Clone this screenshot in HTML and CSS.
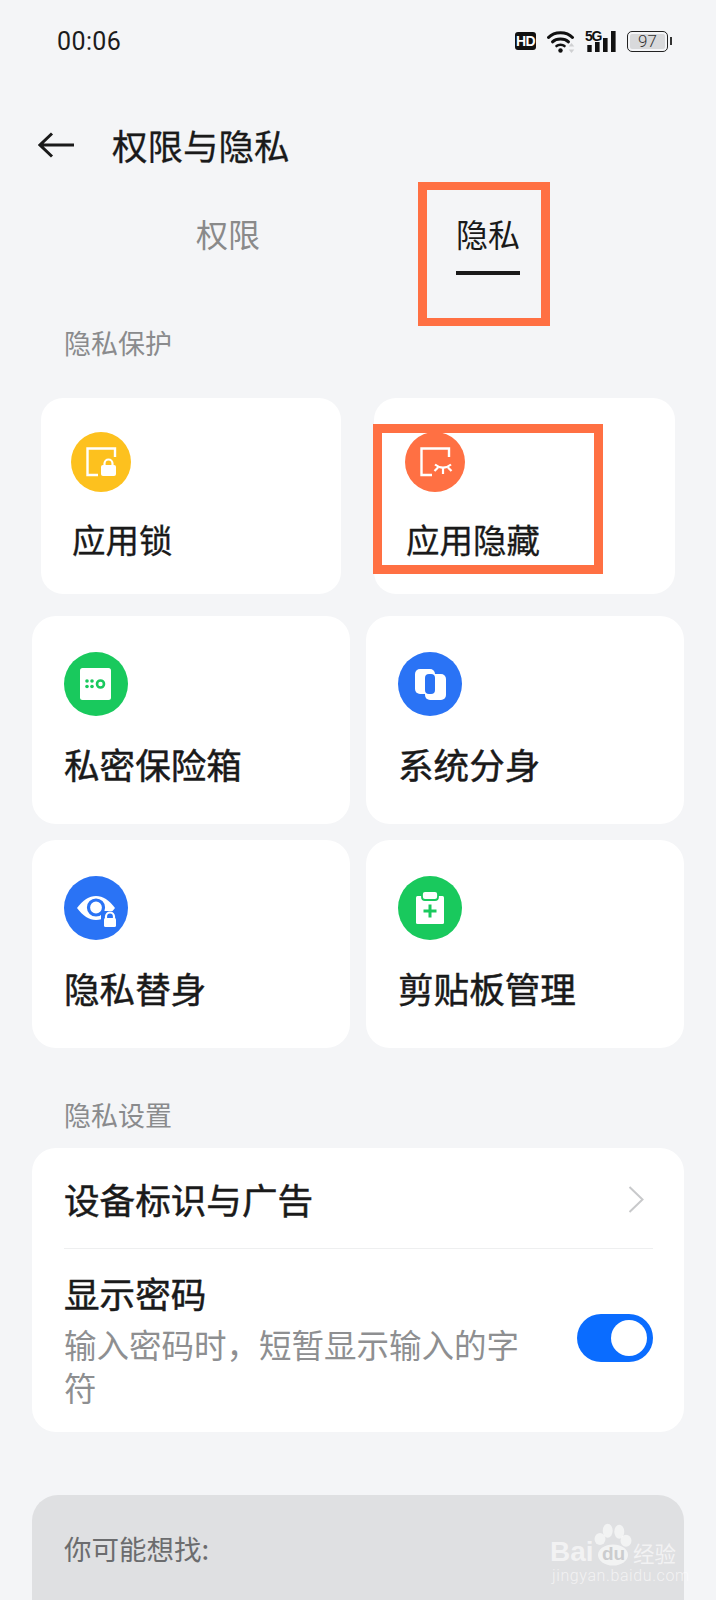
FILE: index.html
```html
<!DOCTYPE html>
<html lang="zh-CN">
<head>
<meta charset="utf-8">
<title>权限与隐私</title>
<link rel="stylesheet" href="styles.css">
</head>
<body>
<div class="page">
  <header class="status">
    <span class="time">00:06</span>
    <div class="status-icons">
      <span class="hd">HD</span>
      <svg class="wifi" width="28" height="23" viewBox="0 0 28 23" fill="none">
        <path d="M1.500 7.500C7.500 1 19.500 1 25.500 7.500" stroke="#111" stroke-width="3" stroke-linecap="round"/>
        <path d="M5.500 11.800C9.500 8 17.500 8 21.500 11.800" stroke="#111" stroke-width="3" stroke-linecap="round"/>
        <path d="M9.500 16C11.500 14.300 15.500 14.300 17.500 16" stroke="#111" stroke-width="2.600" stroke-linecap="round"/>
        <circle cx="13.500" cy="20.500" r="2.200" fill="#111"/>
        <path d="M24.500 13l2.800 3.500h-5.600zM24.500 23l2.800-3.500h-5.600z" fill="#cfd0d2"/>
      </svg>
      <div class="signal">
        <span class="five-g">5G</span>
        <svg width="31" height="21" viewBox="0 0 31 21" fill="#111">
          <rect x="2.300" y="14" width="4.400" height="7"/>
          <rect x="10" y="11" width="4.600" height="10"/>
          <rect x="18" y="7" width="4.600" height="14"/>
          <rect x="26" y="0" width="4.600" height="21"/>
        </svg>
      </div>
      <div class="battery"><span class="battery-level">97</span></div>
    </div>
  </header>

  <div class="toolbar">
    <svg class="back" width="36" height="26" viewBox="0 0 36 26" fill="none">
      <path d="M14 1.500L2 13l12 11.500M2 13h34" stroke="#1a1a1a" stroke-width="3"/>
    </svg>
    <h1 class="title">权限与隐私</h1>
  </div>

  <nav class="tabs">
    <span class="tab">权限</span>
    <span class="tab tab-active"><span class="tab-text">隐私</span><span class="tab-line"></span></span>
  </nav>

  <h2 class="section-label section-label-first">隐私保护</h2>

  <div class="row-small">
    <div class="card card-small">
      <svg class="icon-small" viewBox="0 0 60 60">
        <circle cx="30" cy="30" r="30" fill="#fdc11e"/>
        <path d="M44 25V16.500H16.500V43H27" fill="none" stroke="#fff" stroke-width="2.400"/>
        <rect x="30" y="33" width="15" height="11" rx="2" fill="#fff"/>
        <path d="M33.500 34v-2.500a4 4 0 0 1 8 0V34" fill="none" stroke="#fff" stroke-width="2.200"/>
      </svg>
      <div class="card-title-small">应用锁</div>
    </div>
    <div class="card card-small card-marked">
      <svg class="icon-small" viewBox="0 0 60 60">
        <circle cx="30" cy="30" r="30" fill="#ff7043"/>
        <path d="M44 25V16.500H16.500V43H27" fill="none" stroke="#fff" stroke-width="2.400"/>
        <path d="M30 32.500q8 6.500 16 0M38 36.500V42M33 35.500l-3.500 3.500M43 35.500l3.500 3.500" fill="none" stroke="#fff" stroke-width="2.200"/>
      </svg>
      <div class="card-title-small">应用隐藏</div>
      <div class="mark-box"></div>
    </div>
  </div>

  <div class="grid">
    <div class="card">
      <svg class="icon" viewBox="0 0 64 64">
        <circle cx="32" cy="32" r="32" fill="#19c95d"/>
        <rect x="16" y="16" width="31" height="32" rx="2.500" fill="#fff"/>
        <g fill="#19c95d">
          <circle cx="23" cy="29" r="1.800"/><circle cx="28" cy="29" r="1.800"/>
          <circle cx="23" cy="34.500" r="1.800"/><circle cx="28" cy="34.500" r="1.800"/>
        </g>
        <circle cx="36.500" cy="32" r="3.500" fill="none" stroke="#19c95d" stroke-width="2.600"/>
      </svg>
      <div class="card-title">私密保险箱</div>
    </div>
    <div class="card">
      <svg class="icon" viewBox="0 0 64 64">
        <circle cx="32" cy="32" r="32" fill="#2a73f5"/>
        <rect x="17" y="17" width="20" height="25" rx="5" fill="#fff"/>
        <rect x="27" y="22" width="21" height="26" rx="5" fill="#fff"/>
        <rect x="27" y="22" width="10" height="20" rx="4" fill="#2a73f5"/>
      </svg>
      <div class="card-title">系统分身</div>
    </div>
    <div class="card">
      <svg class="icon" viewBox="0 0 64 64">
        <circle cx="32" cy="32" r="32" fill="#2a73f5"/>
        <path d="M13 32C19 24 25 20 32 20S45 24 51 32C45 40 39 44 32 44S19 40 13 32Z" fill="#fff"/>
        <circle cx="32" cy="31.500" r="7.500" fill="#fff" stroke="#2a73f5" stroke-width="3.200"/>
        <rect x="37" y="35" width="18" height="18" rx="3" fill="#2a73f5"/>
        <path d="M42 43v-2.500a4 4 0 0 1 8 0V43" fill="none" stroke="#fff" stroke-width="2.200"/>
        <rect x="40" y="42" width="12" height="9" rx="1.500" fill="#fff"/>
      </svg>
      <div class="card-title">隐私替身</div>
    </div>
    <div class="card">
      <svg class="icon" viewBox="0 0 64 64">
        <circle cx="32" cy="32" r="32" fill="#19c95d"/>
        <rect x="18" y="20" width="28" height="28" rx="1.500" fill="#fff"/>
        <rect x="24" y="15" width="16" height="9" rx="3" fill="#fff" stroke="#19c95d" stroke-width="1.800"/>
        <path d="M32 28.500v13M25.500 35h13" stroke="#19c95d" stroke-width="3" fill="none"/>
      </svg>
      <div class="card-title">剪贴板管理</div>
    </div>
  </div>

  <h2 class="section-label section-label-second">隐私设置</h2>

  <section class="card settings">
    <div class="setting-link">
      <span class="setting-title">设备标识与广告</span>
      <svg class="chevron" width="16" height="27" viewBox="0 0 16 27" fill="none">
        <path d="M1.500 1l13 12.500-13 12.500" stroke="#c8c9cb" stroke-width="2"/>
      </svg>
    </div>
    <div class="setting-toggle">
      <div class="setting-body">
        <div class="setting-title">显示密码</div>
        <div class="setting-desc">输入密码时，短暂显示输入的字符</div>
      </div>
      <div class="toggle"><span class="toggle-knob"></span></div>
    </div>
  </section>

  <section class="suggest">你可能想找:</section>

  <div class="watermark">
    <div class="wm-logo">
      <span class="wm-bai">Bai</span>
      <span class="wm-paw">
        <svg width="40" height="43" viewBox="0 0 40 43">
          <g fill="#ffffff" fill-opacity="0.6">
            <ellipse cx="14.700" cy="7.700" rx="5" ry="7"/>
            <ellipse cx="26.300" cy="8.700" rx="5" ry="7"/>
            <ellipse cx="7" cy="16" rx="5.500" ry="6"/>
            <ellipse cx="33" cy="17.700" rx="5.500" ry="6"/>
            <ellipse cx="20" cy="32" rx="15" ry="10.500"/>
          </g>
        </svg>
        <span class="wm-du">du</span>
      </span>
      <span class="wm-jingyan">经验</span>
    </div>
    <div class="wm-url">jingyan.baidu.com</div>
  </div>
</div>
</body>
</html>
```
FILE: styles.css
```css
* { box-sizing: border-box; }
html, body { margin: 0; padding: 0; }
body {
  background: #f4f5f7;
  font-family: "Noto Sans CJK SC", "Noto Sans", sans-serif;
  color: #1a1a1a;
}
.page {
  position: relative;
  width: 716px;
  height: 1600px;
  overflow: hidden;
  background: #f4f5f7;
}
.status {
  height: 82px;
  padding: 0 48px 0 57px;
  display: flex;
  align-items: center;
  justify-content: space-between;
}
.time {
  font-family: Roboto, sans-serif;
  font-size: 25px;
  letter-spacing: 0.4px;
  color: #1c1c1c;
}
.status-icons {
  display: flex;
  align-items: center;
}
.hd {
  width: 21px;
  height: 18px;
  margin-right: 11px;
  border-radius: 3px;
  background: #111;
  color: #fff;
  font-family: "Liberation Sans", sans-serif;
  font-weight: 700;
  font-size: 14px;
  line-height: 18px;
  text-align: center;
  letter-spacing: -0.6px;
}
.wifi { margin-right: 10px; }
.signal {
  position: relative;
  width: 31px;
  height: 21px;
  margin-right: 11px;
}
.signal svg { display: block; }
.five-g {
  position: absolute;
  left: 0;
  top: -2px;
  font-family: "Liberation Sans", sans-serif;
  font-weight: 700;
  font-size: 14px;
  line-height: 14px;
  letter-spacing: -1.2px;
  color: #111;
}
.battery {
  position: relative;
  width: 41px;
  height: 21px;
  padding: 2px;
  border: 1.500px solid #222;
  border-radius: 5px;
}
.battery::after {
  content: "";
  position: absolute;
  right: -5px;
  top: 5px;
  width: 2px;
  height: 8px;
  background: #333;
}
.battery-level {
  display: block;
  height: 100%;
  border-radius: 2px;
  background: #d8d9db;
  font-family: Roboto, sans-serif;
  font-size: 17px;
  font-weight: 300;
  line-height: 15px;
  text-align: center;
  color: #333;
}
.toolbar {
  height: 100px;
  padding: 38px 0 0 38px;
  display: flex;
  align-items: flex-start;
}
.back { margin: 12px 38px 0 0; }
.title {
  margin: 0;
  font-size: 35.500px;
  font-weight: 400;
  line-height: 50px;
  -webkit-text-stroke: 0.3px #1a1a1a;
}
.tabs {
  height: 144px;
  display: flex;
  padding-left: 196px;
}
.tab {
  width: 64px;
  margin-right: 158px;
  padding-top: 28px;
  font-size: 32px;
  line-height: 46px;
  color: #8a8a8a;
}
.tab-active {
  width: 132px;
  margin: 0;
  padding: 20px 0 0 8px;
  border: solid #ff7043;
  border-width: 8px 9px;
  color: #1a1a1a;
  display: flex;
  flex-direction: column;
  align-items: center;
}
.tab-line {
  width: 64px;
  height: 4px;
  margin-top: 15px;
  background: #1a1a1a;
}
.section-label {
  margin: 0 0 36px 64px;
  font-size: 27px;
  font-weight: 400;
  line-height: 36px;
  color: #8a8b8d;
}
.section-label-first {
  margin-top: -1px;
  margin-bottom: 37px;
}
.section-label-second {
  margin-top: 49px;
  margin-bottom: 15px;
}
.card {
  background: #fff;
  border-radius: 24px;
}
.row-small {
  display: grid;
  grid-template-columns: 300px 301px;
  gap: 33px;
  margin: 0 41px 22px;
}
.card-small {
  height: 196px;
  padding: 34px 0 0 30px;
  border-radius: 22px;
}
.card-marked {
  position: relative;
  padding-left: 31px;
}
.card-small .card-title-small { margin-left: 1px; }
.mark-box {
  position: absolute;
  left: -1px;
  top: 26px;
  width: 230px;
  height: 150px;
  border: 9px solid #ff7043;
}
.icon-small {
  display: block;
  width: 60px;
  height: 60px;
}
.card-title-small {
  margin-top: 25px;
  font-size: 33.500px;
  line-height: 44px;
  -webkit-text-stroke: 0.3px #1a1a1a;
}
.grid {
  display: grid;
  grid-template-columns: 318px 318px;
  grid-auto-rows: 208px;
  gap: 16px;
  margin: 0 32px;
}
.grid .card { padding: 36px 0 0 32px; }
.icon {
  display: block;
  width: 64px;
  height: 64px;
}
.card-title {
  margin-top: 25px;
  font-size: 35.600px;
  font-weight: 400;
  line-height: 46px;
  -webkit-text-stroke: 0.5px #1a1a1a;
}
.settings {
  height: 284px;
  margin: 0 32px;
  padding: 0 31px 0 32px;
}
.setting-link {
  height: 101px;
  padding-top: 28px;
  border-bottom: 1px solid #eeeff0;
  display: flex;
  align-items: flex-start;
  justify-content: space-between;
}
.chevron { margin: 10px 9px 0 0; }
.setting-title {
  font-size: 35.600px;
  font-weight: 400;
  line-height: 46px;
  -webkit-text-stroke: 0.5px #1a1a1a;
}
.setting-toggle {
  padding-top: 21px;
  display: flex;
  justify-content: space-between;
  align-items: flex-start;
}
.setting-body { width: 480px; }
.setting-desc {
  margin-top: 6px;
  font-size: 32.500px;
  line-height: 43px;
  color: #8e8f91;
}
.toggle {
  width: 76px;
  height: 48px;
  margin-top: 44px;
  padding: 6px 6px 6px 0;
  border-radius: 24px;
  background: #0a6cff;
  display: flex;
  justify-content: flex-end;
}
.toggle-knob {
  width: 36px;
  height: 36px;
  border-radius: 50%;
  background: #fff;
}
.suggest {
  height: 140px;
  margin: 63px 32px 0;
  padding: 31px 32px 0;
  border-radius: 26px;
  background: #dfe0e2;
  font-size: 27.500px;
  line-height: 44px;
  color: #6b6c6e;
}
.watermark {
  position: absolute;
  left: 550px;
  top: 1523px;
  width: 130px;
  color: rgba(255, 255, 255, 0.6);
}
.wm-logo {
  display: flex;
  align-items: flex-end;
  height: 43px;
}
.wm-bai {
  width: 43px;
  font-family: "Liberation Sans", sans-serif;
  font-size: 28px;
  font-weight: 700;
  line-height: 28px;
}
.wm-paw {
  position: relative;
  width: 40px;
  height: 43px;
}
.wm-paw svg { display: block; }
.wm-du {
  position: absolute;
  left: 9px;
  top: 21px;
  font-family: "Liberation Sans", sans-serif;
  font-size: 19px;
  font-weight: 700;
  line-height: 20px;
  color: #cbccce;
}
.wm-jingyan {
  margin-bottom: -2px;
  font-size: 21.500px;
  line-height: 30px;
}
.wm-url {
  margin: 2px 0 0 2px;
  font-family: Roboto, sans-serif;
  font-size: 16px;
  font-weight: 300;
  letter-spacing: 0.6px;
  line-height: 16px;
  white-space: nowrap;
}
```
